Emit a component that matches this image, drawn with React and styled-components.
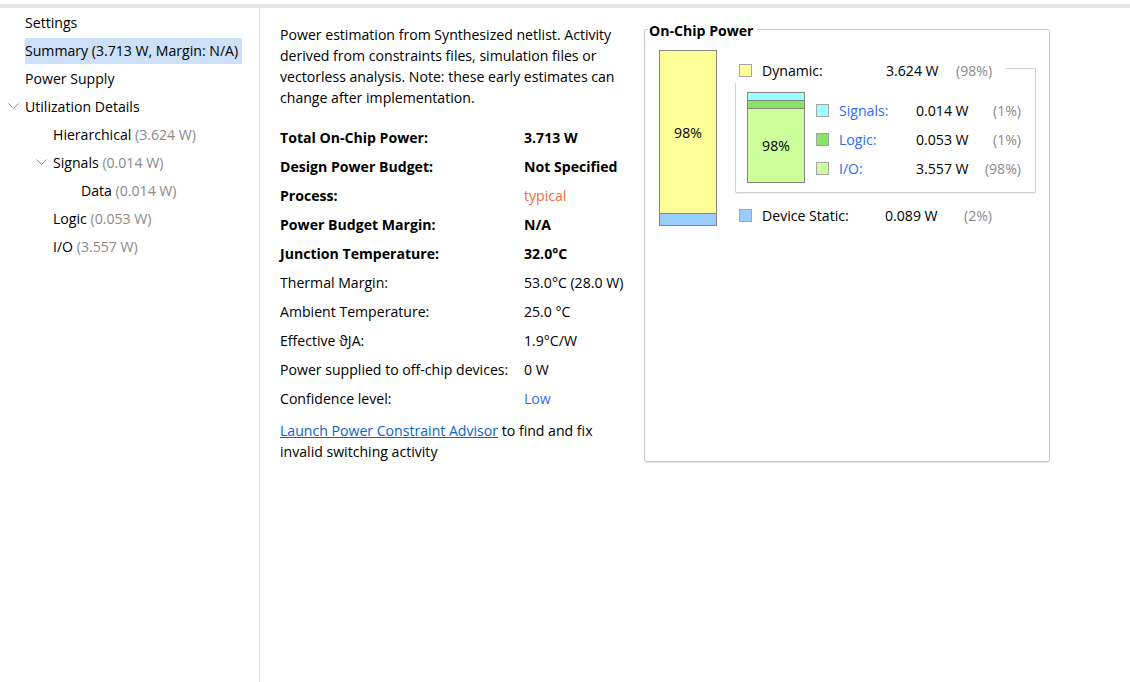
import React from 'react';
import styled, { createGlobalStyle } from 'styled-components';

const GlobalStyle = createGlobalStyle`
  html, body {
    margin: 0;
    padding: 0;
    background: #fff;
  }
  body {
    font-family: "Open Sans", "Noto Sans", "Liberation Sans", sans-serif;
    font-size: 14.1px;
    color: #000;
  }
`;

const Page = styled.div`
  width: 1130px;
  height: 682px;
  display: flex;
  flex-direction: column;
  overflow: hidden;
`;

const TopStrip = styled.div`
  height: 4px;
  flex: none;
`;

const TopBar = styled.div`
  height: 4px;
  background: #e6e6e6;
  flex: none;
`;

const Main = styled.div`
  flex: 1;
  display: flex;
  min-height: 0;
`;

const Sidebar = styled.div`
  width: 259px;
  flex: none;
  border-right: 1px solid #e3e3e3;
  padding-top: 1px;
`;

const TreeRow = styled.div`
  height: 28px;
  display: flex;
  align-items: center;
  padding-left: ${p => 25 + p.level * 28}px;
  position: relative;
  white-space: nowrap;
`;

const Chevron = styled.svg`
  position: absolute;
  left: ${p => 8 + p.level * 28}px;
  top: 10px;
`;

const TreeLabel = styled.span`
  padding: 3px 4px 4px 0;
  background: ${p => (p.selected ? '#cce0f8' : 'transparent')};
`;

const Muted = styled.span`
  color: #8a8a8a;
`;

const Content = styled.div`
  flex: 1;
  display: flex;
  padding: 16px 0 0 20px;
  align-items: flex-start;
`;

const InfoColumn = styled.div`
  width: 364px;
  flex: none;
`;

const Intro = styled.p`
  margin: 0;
  width: 345px;
  line-height: 21px;
`;

const InfoTable = styled.div`
  display: grid;
  grid-template-columns: 244px auto;
  grid-auto-rows: 29px;
  align-items: center;
  margin-top: 15px;
`;

const Cell = styled.div`
  font-weight: ${p => (p.bold ? 700 : 400)};
  color: ${p => p.color || '#000'};
  white-space: nowrap;
`;

const AdvisorNote = styled.p`
  margin: 7px 0 0;
  line-height: 21px;
  width: 345px;
`;

const Link = styled.a`
  color: #0b63ce;
  text-decoration: underline;
  cursor: pointer;
`;

const Panel = styled.div`
  position: relative;
  margin-top: 5px;
  width: 406px;
  height: 433px;
  border: 1px solid #c9c9c9;
  border-radius: 2px;
  box-shadow: 0 1px 0 #e2e2e2;
  display: flex;
  align-items: flex-start;
  padding: 20px 0 0 14px;
  box-sizing: border-box;
`;

const PanelTitle = styled.div`
  position: absolute;
  top: -8px;
  left: 3px;
  background: #fff;
  padding: 0 3px 0 1px;
  font-weight: 700;
  line-height: 18px;
`;

const StackBar = styled.div`
  width: ${p => p.w}px;
  height: ${p => p.h}px;
  border: 1px solid #858585;
  box-sizing: border-box;
  display: flex;
  flex-direction: column;
  flex: none;
`;

const Segment = styled.div`
  background: ${p => p.color};
  height: ${p => p.size}px;
  flex: ${p => (p.grow ? 1 : 'none')};
  border-top: ${p => (p.first ? 'none' : '1px solid #858585')};
  display: flex;
  align-items: center;
  justify-content: center;
`;

const Breakdown = styled.div`
  margin-left: 18px;
  width: 301px;
  margin-top: 8px;
`;

const LegendRow = styled.div`
  height: ${p => p.h || 24}px;
  display: grid;
  grid-template-columns: ${p => p.cols};
  align-items: center;
  white-space: nowrap;
`;

const Swatch = styled.span`
  width: 13px;
  height: 13px;
  box-sizing: border-box;
  border: 1px solid #a6a6a6;
  background: ${p => p.color};
  display: block;
`;

const Name = styled.span`
  color: ${p => (p.link ? '#2f6cf2' : '#000')};
`;

const Pct = styled.span`
  color: #8a8a8a;
  text-align: right;
`;

const DynamicBox = styled.div`
  position: relative;
  margin-top: 1px;
  height: 110px;
  border: 1px solid #d2d2d2;
  border-top: none;
  border-radius: 0 0 2px 2px;
  box-shadow: 0 1px 0 #ececec;
  display: flex;
  align-items: flex-start;
  padding: 9px 14px 0 11px;
  box-sizing: border-box;

  &::before {
    content: '';
    position: absolute;
    top: -15px;
    right: -1px;
    width: 30px;
    height: 15px;
    border-top: 1px solid #d2d2d2;
    border-right: 1px solid #d2d2d2;
    border-top-right-radius: 2px;
  }
`;

const SubLegend = styled.div`
  margin-left: 11px;
  margin-top: 4px;
  flex: 1;
`;

const StaticRow = styled(LegendRow)`
  margin-top: 10px;
`;

const tree = [
  { label: 'Settings', level: 0 },
  { label: 'Summary (3.713 W, Margin: N/A)', level: 0, selected: true },
  { label: 'Power Supply', level: 0 },
  { label: 'Utilization Details', level: 0, open: true },
  { label: 'Hierarchical', extra: '(3.624 W)', level: 1 },
  { label: 'Signals', extra: '(0.014 W)', level: 1, open: true },
  { label: 'Data', extra: '(0.014 W)', level: 2 },
  { label: 'Logic', extra: '(0.053 W)', level: 1 },
  { label: 'I/O', extra: '(3.557 W)', level: 1 },
];

const info = [
  ['Total On-Chip Power:', '3.713 W', true],
  ['Design Power Budget:', 'Not Specified', true],
  ['Process:', 'typical', true, '#f26b3a'],
  ['Power Budget Margin:', 'N/A', true],
  ['Junction Temperature:', '32.0°C', true],
  ['Thermal Margin:', '53.0°C (28.0 W)'],
  ['Ambient Temperature:', '25.0 °C'],
  ['Effective \u03D1JA:', '1.9°C/W'],
  ['Power supplied to off-chip devices:', '0 W'],
  ['Confidence level:', 'Low', false, '#2f6cf2'],
];

const subs = [
  { name: 'Signals:', value: '0.014 W', pct: '(1%)', color: '#99ffff' },
  { name: 'Logic:', value: '0.053 W', pct: '(1%)', color: '#88e466' },
  { name: 'I/O:', value: '3.557 W', pct: '(98%)', color: '#ccff99' },
];

const ChevronIcon = ({ level }) => (
  <Chevron level={level} width="11" height="7" viewBox="0 0 11 7">
    <polyline points="0.5,0.5 5.5,5.5 10.5,0.5" fill="none" stroke="#8c8c8c" strokeWidth="1" />
  </Chevron>
);

export default function App() {
  return (
    <Page>
      <GlobalStyle />
      <TopStrip />
      <TopBar />
      <Main>
        <Sidebar>
          {tree.map((t) => (
            <TreeRow key={t.label} level={t.level}>
              {t.open ? <ChevronIcon level={t.level} /> : null}
              <TreeLabel selected={t.selected}>
                {t.label}
                {t.extra ? <Muted> {t.extra}</Muted> : null}
              </TreeLabel>
            </TreeRow>
          ))}
        </Sidebar>
        <Content>
          <InfoColumn>
            <Intro>
              Power estimation from Synthesized netlist. Activity derived from constraints files,
              simulation files or vectorless analysis. Note: these early estimates can change after
              implementation.
            </Intro>
            <InfoTable>
              {info.map(([k, v, bold, color]) => (
                <React.Fragment key={k}>
                  <Cell bold={bold}>{k}</Cell>
                  <Cell bold={bold && !color} color={color}>{v}</Cell>
                </React.Fragment>
              ))}
            </InfoTable>
            <AdvisorNote>
              <Link>Launch Power Constraint Advisor</Link> to find and fix invalid switching activity
            </AdvisorNote>
          </InfoColumn>
          <Panel>
            <PanelTitle>On-Chip Power</PanelTitle>
            <StackBar w={58} h={176}>
              <Segment first grow color="#ffff99">98%</Segment>
              <Segment size={11} color="#99ccff" />
            </StackBar>
            <Breakdown>
              <LegendRow cols="4px 13px 10px 124px 70px 36px">
                <span />
                <Swatch color="#ffff99" />
                <span />
                <Name>Dynamic:</Name>
                <span>3.624 W</span>
                <Pct>(98%)</Pct>
              </LegendRow>
              <DynamicBox>
                <StackBar w={58} h={91}>
                  <Segment first size={7} color="#99ffff" />
                  <Segment size={7} color="#88e466" />
                  <Segment grow color="#ccff99">98%</Segment>
                </StackBar>
                <SubLegend>
                  {subs.map((s) => (
                    <LegendRow key={s.name} h={29} cols="13px 10px 77px 1fr auto">
                      <Swatch color={s.color} />
                      <span />
                      <Name link>{s.name}</Name>
                      <span>{s.value}</span>
                      <Pct>{s.pct}</Pct>
                    </LegendRow>
                  ))}
                </SubLegend>
              </DynamicBox>
              <StaticRow cols="4px 13px 10px 123px 70px 37px">
                <span />
                <Swatch color="#99ccff" />
                <span />
                <Name>Device Static:</Name>
                <span>0.089 W</span>
                <Pct>(2%)</Pct>
              </StaticRow>
            </Breakdown>
          </Panel>
        </Content>
      </Main>
    </Page>
  );
}
